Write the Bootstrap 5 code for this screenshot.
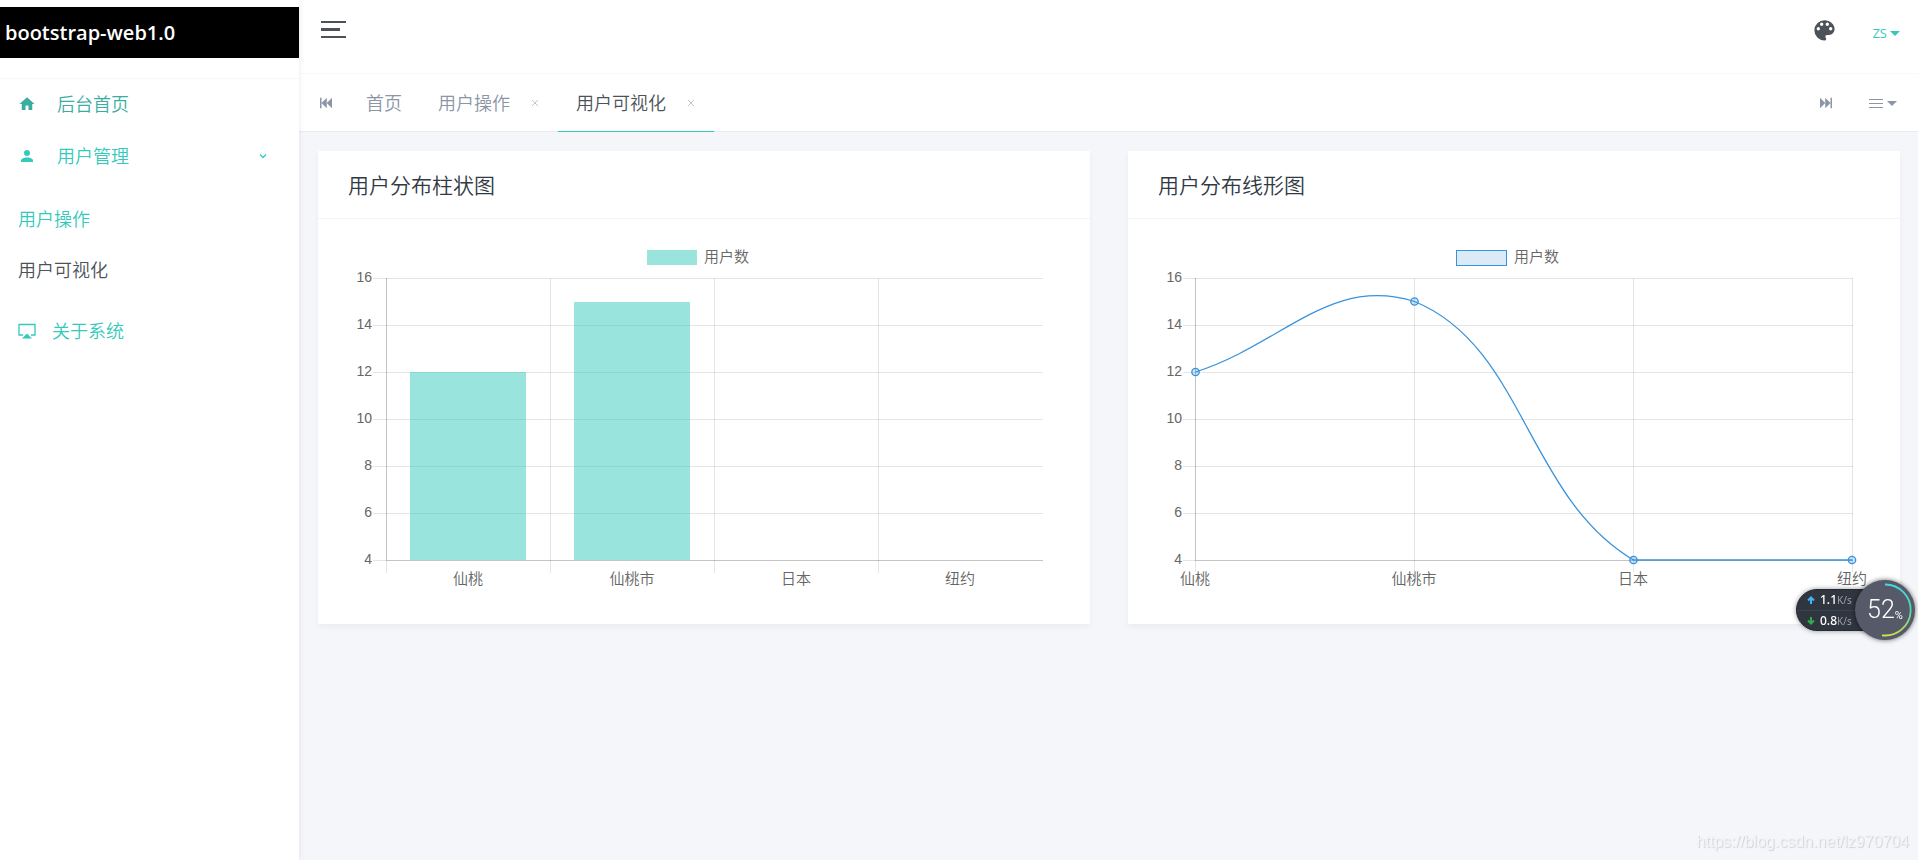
<!DOCTYPE html>
<html lang="zh-CN">
<head>
<meta charset="utf-8">
<meta name="viewport" content="width=device-width, initial-scale=1">
<title>bootstrap-web1.0</title>
<link href="https://cdn.jsdelivr.net/npm/bootstrap@5.3.0/dist/css/bootstrap.min.css" rel="stylesheet">
<style>
  :root { --teal: #33cabb; --ink: #4d5259; --muted: #8b95a5; }
  body { background: #f5f6fa; color: var(--ink); font: 350 18px/26px "Open Sans", "Noto Sans CJK SC", sans-serif; }
  a { text-decoration: none; }
  .sidebar { width: 299px; padding-top: 7px; background: #fff; box-shadow: 0 0 6px rgba(0,0,0,.09); z-index: 2; }
  .brand { height: 51px; padding-left: 5px; background: #000; color: #fff; font-size: 20px; font-weight: 600; }
  .brand:hover { color: #fff; }
  .side-menu { margin-top: 20px; border-top: 1px solid #f7f8f9; }
  .side-link { height: 52px; padding: 0 18px 2px; color: var(--teal); }
  .side-link svg { width: 18px; height: 18px; flex: none; }
  .side-link.hovered { color: #3aada2; }
  .sub-menu { padding: 11px 0 10px; }
  .sub-menu .side-link { height: 51px; }
  .sub-menu .current { color: var(--ink); }
  .wide-gap { gap: 21px; }
  .main-area { min-width: 0; }
  .topbar { height: 74px; padding: 0 18px 0 22px; background: #fff; border-bottom: 1px solid #f9f9fa; }
  .plain-btn { padding: 0; border: 0; background: none; color: inherit; line-height: 1; }
  .burger { margin-top: 21px; height: 17px; }
  .burger i { display: block; width: 25px; height: 2px; background: var(--ink); }
  .burger i:nth-child(2) { width: 19px; height: 3px; }
  .tools { padding-top: 15px; gap: 34px; }
  .user-btn { color: var(--teal); font-size: 13px; font-weight: 400; gap: 3px; }
  .tabbar { height: 58px; padding-right: 2px; background: #fff; border-bottom: 1px solid #ebebef; color: var(--muted); }
  .tab-side { width: 48px; margin-left: 1px; }
  .tab-item { height: 58px; padding: 0 18px; gap: 20px; border-bottom: 1px solid transparent; }
  .tab-item a { color: var(--muted); }
  .tab-item.current { border-color: var(--teal); }
  .tab-item.current a { color: var(--ink); }
  .tab-close { width: 10px; height: 10px; color: #c3c7cc; }
  .page-body { padding: 19px 18px 19px 19px; }
  .page-body .row { --bs-gutter-x: 38px; }
  .chart-card { border: 0; border-radius: 0; box-shadow: 0 3px 6px rgba(0,0,0,.045); }
  .chart-card .card-header { padding: 21px 30px 20px; background: #fff; border-bottom: 1px solid #f3f4f5; }
  .chart-card h4 { margin: 0; font-size: 21px; line-height: 26px; font-weight: 350; color: #313944; }
  .chart-card .card-body { padding: 30px; }
  .chart { display: block; width: 100%; height: auto; font: 350 15px "Liberation Sans", "Noto Sans CJK SC", sans-serif; }
  .chart text { fill: #666; }
  .chart .scale { font-size: 14px; }
  .chart .grid { stroke: #000; stroke-opacity: .1; fill: none; }
  .chart .axis { stroke: #000; stroke-opacity: .14; fill: none; }
  .meter { position: fixed; right: 3px; top: 580px; width: 120px; height: 60px; z-index: 5; color: #fff; font-family: Roboto, sans-serif; }
  .meter-pill { position: absolute; left: 1px; top: 9px; width: 90px; height: 42px; border-radius: 21px; background: #303640; border: 1px solid #262b33; box-shadow: 0 0 5px rgba(0,0,0,.4); font: 500 12px/20px "Noto Sans", sans-serif; }
  .meter-pill div { height: 20px; padding-left: 10px; gap: 5px; }
  .meter-pill div + div { border-top: 1px solid #3d434e; }
  .meter-pill small { font-size: 10px; font-weight: 400; color: #9aa0aa; }
  .meter-dial { position: absolute; right: 0; top: 0; width: 60px; height: 60px; border-radius: 50%; background: #555968; box-shadow: 0 0 5px rgba(0,0,0,.6); font-size: 25px; font-weight: 300; line-height: 60px; }
  .meter-dial svg { position: absolute; left: 0; top: 0; }
  .meter-dial small { font-size: 11px; font-weight: 400; padding-top: 12px; }
  .watermark { position: fixed; right: 9px; bottom: 5px; font: 400 16px/26px "Liberation Sans", sans-serif; color: #f4f4f7; text-shadow: 1px 1px 1px #d0d1d5; }
</style>
</head>
<body>
<div class="d-flex min-vh-100">
  <aside class="sidebar flex-shrink-0">
    <a href="#" class="brand d-flex align-items-center">bootstrap-web1.0</a>
    <nav class="side-menu d-flex flex-column">
      <a href="#" class="side-link hovered d-flex align-items-center wide-gap">
        <svg viewBox="0 0 24 24" fill="currentColor"><path d="M10,20V14H14V20H19V12H22L12,3L2,12H5V20H10Z"/></svg>后台首页</a>
      <a href="#" class="side-link d-flex align-items-center wide-gap">
        <svg viewBox="0 0 24 24" fill="currentColor"><path d="M12,4A4,4 0 0,1 16,8A4,4 0 0,1 12,12A4,4 0 0,1 8,8A4,4 0 0,1 12,4M12,14C16.42,14 20,15.79 20,18V20H4V18C4,15.79 7.58,14 12,14Z"/></svg>用户管理
        <svg class="ms-auto me-2" viewBox="0 0 18 18" fill="none" stroke="currentColor" stroke-width="1.3"><path d="M5 7.500l3 3 3-3"/></svg></a>
      <div class="sub-menu">
        <a href="#" class="side-link d-flex align-items-center">用户操作</a>
        <a href="#" class="side-link current d-flex align-items-center">用户可视化</a>
      </div>
      <a href="#" class="side-link d-flex align-items-center gap-3">
        <svg viewBox="0 0 18 18"><path d="M5 13H1V2.500H17V13H13" fill="none" stroke="currentColor" stroke-width="1.300"/><path d="M4 16.500L9 11.500L14 16.500Z" fill="currentColor"/></svg>关于系统</a>
    </nav>
  </aside>

  <div class="main-area flex-grow-1">
    <header class="topbar d-flex justify-content-between align-items-start">
      <button class="plain-btn burger d-flex flex-column justify-content-between" aria-label="菜单"><i></i><i></i><i></i></button>
      <div class="tools d-flex align-items-center">
        <button class="plain-btn d-flex" aria-label="主题">
          <svg width="27" height="32" viewBox="0 0 24 28" fill="currentColor"><g transform="translate(0 1.500)"><path d="M17.5,12A1.5,1.5 0 0,1 16,10.5A1.5,1.5 0 0,1 17.5,9A1.5,1.5 0 0,1 19,10.5A1.5,1.5 0 0,1 17.5,12M14.5,8A1.5,1.5 0 0,1 13,6.5A1.5,1.5 0 0,1 14.5,5A1.5,1.5 0 0,1 16,6.5A1.5,1.5 0 0,1 14.5,8M9.5,8A1.5,1.5 0 0,1 8,6.5A1.5,1.5 0 0,1 9.5,5A1.5,1.5 0 0,1 11,6.5A1.5,1.5 0 0,1 9.5,8M6.5,12A1.5,1.5 0 0,1 5,10.5A1.5,1.5 0 0,1 6.5,9A1.5,1.5 0 0,1 8,10.5A1.5,1.5 0 0,1 6.5,12M12,3A9,9 0 0,0 3,12A9,9 0 0,0 12,21A1.5,1.5 0 0,0 13.5,19.5C13.5,19.11 13.35,18.76 13.11,18.5C12.88,18.23 12.73,17.88 12.73,17.5A1.5,1.5 0 0,1 14.23,16H16A5,5 0 0,0 21,11C21,6.58 16.97,3 12,3Z"/></g></svg>
        </button>
        <button class="plain-btn user-btn d-flex align-items-center pt-1">ZS<svg width="10" height="5" viewBox="0 0 10 5" fill="currentColor"><path d="M0 0H10L5 5Z"/></svg></button>
      </div>
    </header>

    <nav class="tabbar d-flex">
      <button class="plain-btn tab-side d-flex align-items-center ps-3 pb-3 pt-3" aria-label="上一个">
        <svg width="20" height="18" viewBox="0 0 24 24" fill="currentColor"><path d="M20,5V19L13,12M6,5V19H4V5M13,5V19L6,12"/></svg></button>
      <div class="tab-item d-flex align-items-center"><a href="#">首页</a></div>
      <div class="tab-item d-flex align-items-center"><a href="#">用户操作</a>
        <button class="plain-btn tab-close d-flex" aria-label="关闭"><svg width="10" height="10" viewBox="0 0 10 10" stroke="currentColor"><path d="M2 2L8 8M8 2L2 8"/></svg></button></div>
      <div class="tab-item current d-flex align-items-center"><a href="#">用户可视化</a>
        <button class="plain-btn tab-close d-flex" aria-label="关闭"><svg width="10" height="10" viewBox="0 0 10 10" stroke="currentColor"><path d="M2 2L8 8M8 2L2 8"/></svg></button></div>
      <button class="plain-btn ms-auto d-flex align-items-center" aria-label="下一个">
        <svg width="20" height="18" viewBox="0 0 24 24" fill="currentColor"><path d="M4,5V19L11,12M18,5V19H20V5M11,5V19L18,12"/></svg></button>
      <button class="plain-btn d-flex align-items-center ps-4 pe-3" aria-label="标签选项">
        <svg class="ms-2" width="32" height="10" viewBox="0 0 32 10"><path d="M1 1.500H15M1 5.500H15M1 9.500H15" stroke="currentColor" fill="none"/><path d="M19 3H29L24 8Z" fill="currentColor"/></svg></button>
    </nav>

    <main class="page-body">
      <div class="row">
        <div class="col-6">
          <section class="card chart-card">
            <div class="card-header"><h4>用户分布柱状图</h4></div>
            <div class="card-body">
              <svg class="chart" viewBox="0 0 712 345" role="img" aria-label="用户分布柱状图">
                <rect x="299" y="1" width="50" height="15" fill="#99e5dd"/>
                <text x="356" y="13">用户数</text>
                <path class="grid" d="M25 29.500H695M25 76.500H695M25 123.500H695M25 170.500H695M25 217.500H695M25 264.500H695M25 311.500H695M202.500 29V324M366.500 29V324M530.500 29V324M38.500 29V324"/>
                <path class="axis" d="M38.500 29V311M38 311.500H695"/>
                <g fill="#33cabb" fill-opacity=".5"><rect x="62" y="123" width="116" height="188"/><rect x="226" y="53" width="116" height="258"/></g>
                <g class="scale" text-anchor="end"><text x="24" y="33">16</text><text x="24" y="80">14</text><text x="24" y="127">12</text><text x="24" y="174">10</text><text x="24" y="221">8</text><text x="24" y="268">6</text><text x="24" y="315">4</text></g>
                <g text-anchor="middle"><text x="120" y="335">仙桃</text><text x="284" y="335">仙桃市</text><text x="448" y="335">日本</text><text x="612" y="335">纽约</text></g>
              </svg>
            </div>
          </section>
        </div>
        <div class="col-6">
          <section class="card chart-card">
            <div class="card-header"><h4>用户分布线形图</h4></div>
            <div class="card-body">
              <svg class="chart" viewBox="0 0 712 345" role="img" aria-label="用户分布线形图">
                <rect x="298.500" y="1.500" width="50" height="15" fill="#dbeaf7" stroke="#3993dc"/>
                <text x="356" y="13">用户数</text>
                <path class="grid" d="M25 29.500H695M25 76.500H695M25 123.500H695M25 170.500H695M25 217.500H695M25 264.500H695M25 311.500H695M256.500 29V323M475.500 29V323M694.500 29V323M37.500 29V323"/>
                <path class="axis" d="M37.500 29V311M37 311.500H695"/>
                <path d="M37.500 123C125 95 172 26 256.500 52.500C366 97 369 248 475.500 311C544 311 607 311 694.500 311" fill="none" stroke="#3993dc" stroke-width="1.300"/>
                <g fill="#3993dc" fill-opacity=".25" stroke="#3993dc" stroke-width="1.300"><circle cx="37.500" cy="123" r="3.700"/><circle cx="256.500" cy="52.500" r="3.700"/><circle cx="475.500" cy="311" r="3.700"/><circle cx="694" cy="311" r="3.700"/></g>
                <g class="scale" text-anchor="end"><text x="24" y="33">16</text><text x="24" y="80">14</text><text x="24" y="127">12</text><text x="24" y="174">10</text><text x="24" y="221">8</text><text x="24" y="268">6</text><text x="24" y="315">4</text></g>
                <g text-anchor="middle"><text x="37" y="335">仙桃</text><text x="256" y="335">仙桃市</text><text x="475" y="335">日本</text><text x="694" y="335">纽约</text></g>
              </svg>
            </div>
          </section>
        </div>
      </div>
    </main>
  </div>
</div>

<div class="meter">
  <div class="meter-pill">
    <div class="d-flex align-items-center"><svg width="8" height="8" viewBox="0 0 8 8" fill="none" stroke="#41b4f5" stroke-width="2"><path d="M4 8V2M1 4.500L4 1.500L7 4.500"/></svg><span>1.1<small>K/s</small></span></div>
    <div class="d-flex align-items-center"><svg width="8" height="8" viewBox="0 0 8 8" fill="none" stroke="#2fae4a" stroke-width="2"><path d="M4 0V6M1 3.500L4 6.500L7 3.500"/></svg><span>0.8<small>K/s</small></span></div>
  </div>
  <div class="meter-dial d-flex align-items-center justify-content-center">
    <svg width="60" height="60" viewBox="0 0 60 60" fill="none"><defs><linearGradient id="arc" x1="0" y1="0" x2="0" y2="1"><stop offset="0" stop-color="#45d8e0"/><stop offset=".5" stop-color="#4fd8b0"/><stop offset="1" stop-color="#d3e04a"/></linearGradient></defs><path d="M30 4.500A25.500 25.500 0 1 1 27 55.300" stroke="url(#arc)" stroke-width="1.800"/></svg>
    52<small>%</small>
  </div>
</div>
<div class="watermark">https://blog.csdn.net/lz970704</div>
<script src="https://cdn.jsdelivr.net/npm/bootstrap@5.3.0/dist/js/bootstrap.bundle.min.js"></script>
</body>
</html>
